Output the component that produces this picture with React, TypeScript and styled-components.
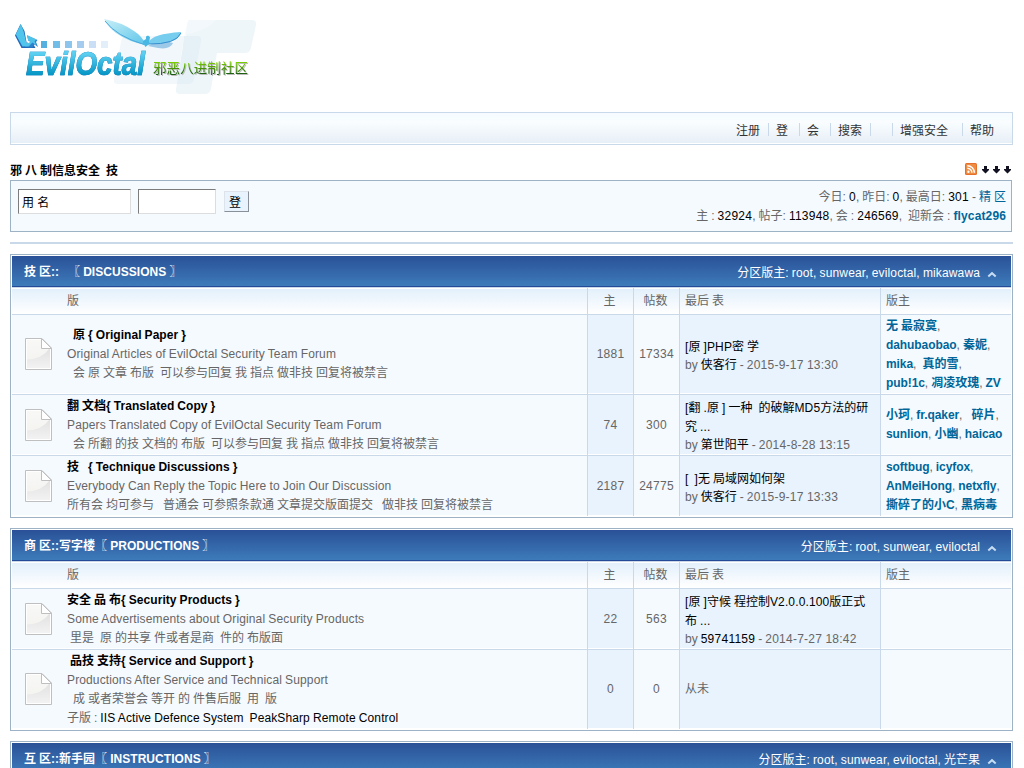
import React from "react";
import styled, { createGlobalStyle } from "styled-components";

const Global = createGlobalStyle`
  * { box-sizing: border-box; }
  body {
    margin: 0;
    background: #fff;
    color: #666;
    font: 12px/19px "Liberation Sans", "Noto Sans CJK SC", sans-serif;
    word-spacing: -0.33px;
    overflow: hidden;
  }
`;

const Page = styled.div`
  width: 1003px;
  height: 768px;
  margin-left: 10px;
  overflow: hidden;
`;

const Latin = styled.span<{ $digits: boolean }>`
  letter-spacing: ${(p) => (p.$digits ? "0.25px" : "var(--latin, 0.13px)")};
`;

/* Latin runs get slightly wider tracking than the full-width glyphs beside them. */
const Mixed = ({ children }: { children: string }) => (
  <>
    {children.split(/([!-~]+(?: [!-~]+)*)/).map((run, i) =>
      i % 2 ? (
        <Latin key={i} $digits={/^\d/.test(run)}>{run}</Latin>
      ) : (
        <React.Fragment key={i}>{run}</React.Fragment>
      )
    )}
  </>
);

const Header = styled.header`
  height: 112px;
  padding-top: 8px;
`;

const Menu = styled.nav`
  display: flex;
  justify-content: flex-end;
  align-items: center;
  height: 33px;
  padding: 2px 18px 0 0;
  border: 1px solid #cad9ea;
  background: linear-gradient(#f5fbff, #f9fdff 30%, #e6eef6);
  box-shadow: inset 0 -1px #fff;
  color: #333;
`;

const MenuItem = styled.a<{ $w: number; $first?: boolean }>`
  display: flex;
  align-items: center;
  width: ${(p) => p.$w}px;
  height: 13px;
  padding: 3px 0 0 7px;
  border-left: ${(p) => (p.$first ? "0" : "1px solid #cad9ea")};
  white-space: pre;
`;

const TitleBar = styled.div`
  display: flex;
  justify-content: space-between;
  height: 35px;
  padding: 17px 1px 0 0;
  color: #000;
  font-weight: bold;
  white-space: pre;
`;

const FeedIcons = styled.div`
  display: flex;
  gap: 4px;
  padding: 1px 1px 0 0;
`;

const LoginBox = styled.section`
  display: flex;
  justify-content: space-between;
  width: 1002px;
  height: 52px;
  padding: 6px 5px 0 7px;
  border: 1px solid #9db3c5;
  background: #f5faff;
`;

const LoginForm = styled.form`
  display: flex;
  align-items: flex-start;
  padding-top: 2px;
`;

const Field = styled.input<{ $w: number }>`
  width: ${(p) => p.$w}px;
  height: 25px;
  margin-right: 7px;
  padding: 0 3px;
  border: 1px solid;
  border-color: #7c7c7c #ddd #ddd #7c7c7c;
  border-radius: 0;
  background: #fff;
  color: #000;
  font: inherit;
`;

const Submit = styled.button`
  width: 25px;
  height: 21px;
  margin: 2px 0 0 1px;
  border: 1px solid;
  border-color: #dde3ea #8a9099 #8a9099 #dde3ea;
  background: #e8f3fd;
  color: #000;
  font: inherit;
  line-height: 16px;
  text-align: left;
  padding: 3px 0 0 4px;
`;

const Stats = styled.div`
  padding-top: 1px;
  text-align: right;
  white-space: pre;
`;

const Strong = styled.span`
  color: #000;
`;

const Link = styled.a<{ $bold?: boolean }>`
  color: #069;
  font-weight: ${(p) => (p.$bold ? "bold" : "normal")};
`;

const Rule = styled.div`
  height: 2px;
  margin: 10px 0;
  background: #cad9ea;
`;

const Block = styled.section`
  margin-bottom: 10px;
  padding: 1px;
  border: 1px solid #9db3c5;
`;

const BlockHead = styled.div`
  display: flex;
  justify-content: space-between;
  height: 31px;
  padding: 7px 14px 0 12px;
  border-bottom: 1px solid #264b96;
  background: linear-gradient(#2a5197, #3d7bba);
  color: #fff;
  white-space: pre;
`;

const BlockTitle = styled.h3`
  margin: 0;
  font-size: 12px;
  line-height: 19px;
  --latin: 0.05px;
`;

const Moderation = styled.div`
  display: flex;
  align-items: center;
  gap: 7px;
  height: 21px;
`;

const Columns = styled.div`
  display: grid;
  grid-template-columns: 575px 46px 46px 201px 131px;
  border-top: 1px solid #cad9ea;
`;

const HeadRow = styled(Columns)`
  height: 27px;
`;

const HeadCell = styled.div<{ $first?: boolean; $center?: boolean }>`
  padding: ${(p) => (p.$center ? "4px 2px 0 0" : `4px 5px 0 ${p.$first ? 55 : 5}px`)};
  border-left: ${(p) => (p.$first ? "0" : "1px solid #cad9ea")};
  background: linear-gradient(#fff 1px, #e3f0fb 1px, #fff);
  text-align: ${(p) => (p.$center ? "center" : "left")};
`;

const Row = styled(Columns)<{ $h: number }>`
  height: ${(p) => p.$h}px;
`;

const Cell = styled.div<{ $alt?: boolean; $center?: boolean }>`
  display: flex;
  align-items: center;
  justify-content: ${(p) => (p.$center ? "center" : "flex-start")};
  min-width: 0;
  padding-left: ${(p) => (p.$center ? 0 : 5)}px;
  border-left: 1px solid #cad9ea;
  background: ${(p) => (p.$alt ? "#e8f3fd" : "#f5faff")};
  box-shadow: inset 0 -1px #fff;
  white-space: pre;
`;

const ForumCell = styled(Cell)`
  gap: 14px;
  padding-left: 12px;
  border-left: 0;
`;

const ForumName = styled.div`
  color: #000;
  font-weight: bold;
  --latin: 0.05px;
`;

const LastPost = styled.div`
  padding-top: 2px;
`;

const ByLine = styled.div`
  line-height: 16px;
`;

const Moderators = styled.div`
  --latin: -0.08px;
`;

const Sheet = styled.svg`
  flex: none;
  margin-bottom: 1px;
`;

const FolderIcon = () => (
  <Sheet width="29" height="34" viewBox="0 0 29 34">
    <defs>
      <linearGradient id="sheet" x1="0" y1="0" x2="0" y2="1">
        <stop offset="0" stopColor="#f8f8f7" />
        <stop offset="1" stopColor="#f3f2ee" />
      </linearGradient>
      <linearGradient id="fold" x1="0" y1="0" x2="0" y2="1">
        <stop offset="0" stopColor="#e2e2e2" />
        <stop offset="1" stopColor="#f2f2f2" />
      </linearGradient>
    </defs>
    <path d="M1.500 1.500H18L27.500 11V32.500H1.500Z" fill="#fff" stroke="#bfbfbf" />
    <path d="M3 3H17V12H26V31H3Z" fill="url(#sheet)" />
    <path d="M3 22.500Q18 22 25 12H26V31H3Z" fill="url(#fold)" />
    <path d="M17.500 1.500V11.500H27.500Z" fill="#fff" stroke="#bfbfbf" />
  </Sheet>
);

const Collapse = () => (
  <svg width="10" height="8" viewBox="0 0 10 8">
    <path d="M1.3 6.5L5 3.2L8.7 6.5" fill="none" stroke="#c5dcf2" strokeWidth="2" />
  </svg>
);

const Feed = styled.svg`
  margin-right: 1px;
`;

const Rss = () => (
  <Feed width="12" height="12" viewBox="0 0 12 12">
    <rect width="12" height="12" rx="1.5" fill="#e5702a" />
    <rect x="1" y="1" width="10" height="10" rx="1" fill="#f08c42" />
    <circle cx="3.4" cy="8.7" r="1.2" fill="#fff" />
    <path d="M2.3 5.2A4.6 4.6 0 0 1 6.9 9.8M2.3 2.7A7.1 7.1 0 0 1 9.4 9.8" fill="none" stroke="#fff" strokeWidth="1.4" />
  </Feed>
);

const Down = () => (
  <svg width="7" height="13" viewBox="0 0 7 13">
    <path d="M2 3H5V6H7V7L3.5 10.5L0 7V6H2Z" fill="#111122" />
  </svg>
);

const WordMark = styled.text`
  font: italic bold 33px "Liberation Sans", sans-serif;
  filter: drop-shadow(0.8px 0.8px 0 #2468b4);
`;

const SiteName = styled.text`
  font: 13.5px "Noto Sans CJK SC", sans-serif;
  filter: drop-shadow(1.5px 1.5px 0.5px #bbb);
`;

const Logo = () => (
  <svg width="260" height="96" viewBox="10 8 260 96">
    <defs>
      <linearGradient id="word" x1="0" y1="0" x2="0" y2="1">
        <stop offset="0.25" stopColor="#5ccff0" />
        <stop offset="0.8" stopColor="#0798c6" />
      </linearGradient>
      <linearGradient id="name" x1="0" y1="0" x2="0" y2="1">
        <stop offset="0.2" stopColor="#84dc00" />
        <stop offset="0.85" stopColor="#1c5c10" />
      </linearGradient>
      <linearGradient id="wing" x1="0" y1="0" x2="1" y2="1">
        <stop offset="0" stopColor="#c9eff7" />
        <stop offset="1" stopColor="#5cc5ea" />
      </linearGradient>
    </defs>
    <path d="M126 36H184L177 84H118Q113 84 114 79L121 42Q122 36 126 36Z" fill="#f1f7fa" />
    <path d="M190 20H252Q257 20 256 25L251 48Q250 53 245 53H217L211 89Q210 94 205 94H180Q175 94 176 89L182 53H184L187 25Q188 20 190 20Z" fill="#eff6fa" />
    <path d="M184 36H197Q202 36 201 41L194 79Q193 84 188 84H177L182 53Z" fill="#e5f1f6" />
    <path d="M184 36L187 25Q188 20 192 20H216Q207 30 185 35Z" fill="#f5fafc" opacity=".7" />
    <path d="M20.500 24L15 35.500L21.500 48H35.500L33.500 44.500L27 45L24.500 31Z" fill="#2468ba" />
    <path d="M20.800 24L15.800 34.500L22.500 46.500L31 46L27.500 42L26.500 43.500L23.500 31Z" fill="#50c5ec" />
    <path d="M27 35.500L37.500 40L36 42L38 47L34.500 44.500L32.500 47.500H28L31.500 42L28.500 41Z" fill="#2c82ca" />
    <path d="M27 35L36.500 39.500L34.500 41L36.500 45.500L32.500 42.500L28.500 46.500H25L30.500 41.500L28 40Z" fill="#4fc2ea" />
    <g>
      <rect x="41" y="41" width="6" height="7" fill="#55b0e0" />
      <rect x="53" y="41" width="7" height="7" fill="#72bde8" />
      <rect x="65" y="41" width="7" height="7" fill="#8dc5ec" />
      <rect x="77" y="41" width="7" height="7" fill="#a5cbef" />
      <rect x="89" y="41" width="7" height="7" fill="#cadef5" />
      <rect x="101" y="41" width="7" height="7" fill="#e2effb" />
    </g>
    <path d="M148 46Q160 39 173 43Q170 50 158 48Z" fill="#9cc9e8" />
    <path d="M104 19Q121 22 134 31Q142 36 146 45Q129 42 116 33Q108 27 104 19Z" fill="url(#wing)" />
    <path d="M105 21Q116 36 144 44.500" fill="none" stroke="#4ba8dc" />
    <path d="M149 42Q152 34 181 32Q180 41 162 43.500L148 44Z" fill="#77cdee" />
    <path d="M148 44Q176 44.500 181 33" fill="none" stroke="#358ed0" />
    <path d="M143 41L146 39V36.500L148 35.500L150 37L149 44L145.500 47L143 43Z" fill="#49b7e3" />
    <WordMark x="26" y="74.500" textLength="119" lengthAdjust="spacingAndGlyphs" fill="url(#word)" stroke="url(#word)" strokeWidth=".7">EvilOctal</WordMark>
    <SiteName x="153" y="73" textLength="95" fill="url(#name)">邪恶八进制社区</SiteName>
  </svg>
);

type Forum = {
  h: number;
  name: string;
  lines: string[];
  sub?: string;
  topics: string;
  posts: string;
  last: string[];
  by?: [string, string];
  /* One entry for each line of moderators. */
  mods: string[];
};

const discussions: Forum[] = [
  {
    h: 80,
    name: "  原 { Original Paper }",
    lines: ["Original Articles of EvilOctal Security Team Forum", "  会 原 文章 布版  可以参与回复 我 指点 做非技 回复将被禁言"],
    topics: "1881",
    posts: "17334",
    last: ["[原 ]PHP密 学"],
    by: ["侠客行", "2015-9-17 13:30"],
    mods: ["无 最寂寞,", "dahubaobao, 秦妮,", "mika,  真的雪,", "pub!1c, 凋凌玫瑰, ZV"],
  },
  {
    h: 61,
    name: "翻 文档{ Translated Copy }",
    lines: ["Papers Translated Copy of EvilOctal Security Team Forum", "  会 所翻 的技 文档的 布版  可以参与回复 我 指点 做非技 回复将被禁言"],
    topics: "74",
    posts: "300",
    last: ["[翻 .原 ] 一种  的破解MD5方法的研", "究 ..."],
    by: ["第世阳平", "2014-8-28 13:15"],
    mods: ["小珂, fr.qaker,   碎片,", "sunlion, 小幽, haicao"],
  },
  {
    h: 61,
    name: "技   { Technique Discussions }",
    lines: ["Everybody Can Reply the Topic Here to Join Our Discussion", "所有会 均可参与   普通会 可参照条款通 文章提交版面提交   做非技 回复将被禁言"],
    topics: "2187",
    posts: "24775",
    last: ["[  ]无 局域网如何架"],
    by: ["侠客行", "2015-9-17 13:33"],
    mods: ["softbug, icyfox,", "AnMeiHong, netxfly,", "撕碎了的小C, 黑病毒"],
  },
];

const productions: Forum[] = [
  {
    h: 61,
    name: "安全 品 布{ Security Products }",
    lines: ["Some Advertisements about Original Security Products", " 里是  原 的共享 件或者是商  件的 布版面"],
    topics: "22",
    posts: "563",
    last: ["[原 ]守候 程控制V2.0.0.100版正式", "布 ..."],
    by: ["59741159", "2014-7-27 18:42"],
    mods: [],
  },
  {
    h: 80,
    name: " 品技 支持{ Service and Support }",
    lines: ["Productions After Service and Technical Support", "  成 或者荣誉会 等开 的 件售后服  用  版"],
    sub: "IIS Active Defence System  PeakSharp Remote Control",
    topics: "0",
    posts: "0",
    last: [],
    mods: [],
  },
];

const ModLine = ({ text }: { text: string }) => (
  <div>
    {text.split(/(,\s*)/).map((part, i) =>
      i % 2 ? <span key={i}>{part}</span> : <Link key={i} $bold><Mixed>{part}</Mixed></Link>
    )}
  </div>
);

const SubForums = styled.span`
  color: #000;
  --latin: 0.11px;
`;

const ForumRow = ({ f }: { f: Forum }) => (
  <Row $h={f.h}>
    <ForumCell>
      <FolderIcon />
      <div>
        <ForumName><Mixed>{f.name}</Mixed></ForumName>
        {f.lines.map((l) => <div key={l}><Mixed>{l}</Mixed></div>)}
        {f.sub && <div>子版 : <SubForums><Mixed>{f.sub}</Mixed></SubForums></div>}
      </div>
    </ForumCell>
    <Cell $alt $center><Mixed>{f.topics}</Mixed></Cell>
    <Cell $center><Mixed>{f.posts}</Mixed></Cell>
    <Cell $alt>
      {f.by ? (
        <LastPost>
          {f.last.map((l) => <Strong as="div" key={l}><Mixed>{l}</Mixed></Strong>)}
          <ByLine>by <Strong><Mixed>{f.by[0]}</Mixed></Strong> - <Mixed>{f.by[1]}</Mixed></ByLine>
        </LastPost>
      ) : "从未"}
    </Cell>
    <Cell><Moderators>{f.mods.map((m) => <ModLine key={m} text={m} />)}</Moderators></Cell>
  </Row>
);

const Category = ({ title, mods, forums }: { title: string; mods: string; forums: Forum[] }) => (
  <Block>
    <BlockHead>
      <BlockTitle><Mixed>{title}</Mixed></BlockTitle>
      <Moderation><span><Mixed>{mods}</Mixed></span><Collapse /></Moderation>
    </BlockHead>
    {forums.length > 0 && (
      <HeadRow>
        <HeadCell $first>版</HeadCell>
        <HeadCell $center>主</HeadCell>
        <HeadCell $center>帖数</HeadCell>
        <HeadCell>最后 表</HeadCell>
        <HeadCell>版主</HeadCell>
      </HeadRow>
    )}
    {forums.map((f) => <ForumRow key={f.name} f={f} />)}
  </Block>
);

export default function App() {
  return (
    <Page>
      <Global />
      <Header><Logo /></Header>
      <Menu>
        <MenuItem $w={39} $first>注册</MenuItem>
        <MenuItem $w={31}>登</MenuItem>
        <MenuItem $w={31}>会</MenuItem>
        <MenuItem $w={40}>搜索</MenuItem>
        <MenuItem $w={22} />
        <MenuItem $w={70}>增强安全</MenuItem>
        <MenuItem $w={32}>帮助</MenuItem>
      </Menu>
      <TitleBar>
        <span>邪 八 制信息安全  技</span>
        <FeedIcons><Rss /><Down /><Down /><Down /></FeedIcons>
      </TitleBar>
      <LoginBox>
        <LoginForm>
          <Field $w={113} defaultValue="用 名" />
          <Field $w={78} />
          <Submit type="button">登</Submit>
        </LoginForm>
        <Stats>
          <div>今日: <Strong><Mixed>0</Mixed></Strong>, 昨日: <Strong><Mixed>0</Mixed></Strong>, 最高日: <Strong><Mixed>301</Mixed></Strong> - <Link>精 区</Link></div>
          <div>主 : <Strong><Mixed>32924</Mixed></Strong>, 帖子: <Strong><Mixed>113948</Mixed></Strong>, 会 : <Strong><Mixed>246569</Mixed></Strong>,  迎新会 : <Link $bold><Mixed>flycat296</Mixed></Link></div>
        </Stats>
      </LoginBox>
      <Rule />
      <Category title="技 区::   〖 DISCUSSIONS 〗" mods="分区版主: root, sunwear, eviloctal, mikawawa" forums={discussions} />
      <Category title="商 区::写字楼〖 PRODUCTIONS 〗" mods="分区版主: root, sunwear, eviloctal" forums={productions} />
      <Category title="互 区::新手园〖 INSTRUCTIONS 〗" mods="分区版主: root, sunwear, eviloctal, 光芒果" forums={[]} />
    </Page>
  );
}
